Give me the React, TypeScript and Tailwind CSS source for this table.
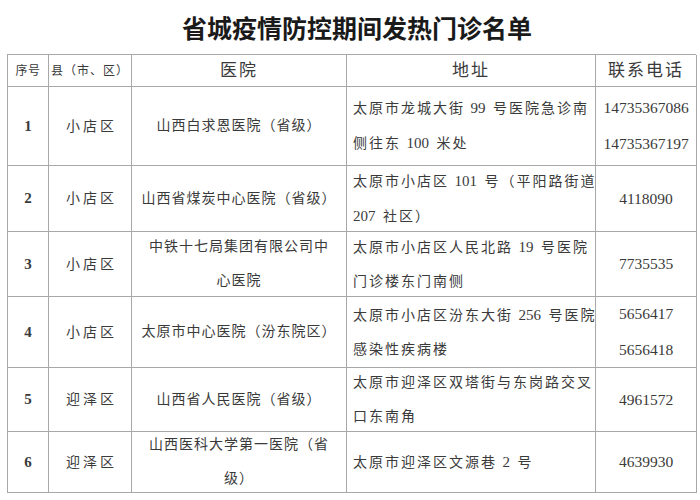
const rows = [
  {
    no: '1',
    area: '小店区',
    hospital: ['山西白求恩医院（省级）'],
    address: ['太原市龙城大街 99 号医院急诊南', '侧往东 100 米处'],
    phone: ['14735367086', '14735367197'],
  },
  {
    no: '2',
    area: '小店区',
    hospital: ['山西省煤炭中心医院（省级）'],
    address: ['太原市小店区 101 号（平阳路街道', '207 社区）'],
    phone: ['4118090'],
  },
  {
    no: '3',
    area: '小店区',
    hospital: ['中铁十七局集团有限公司中', '心医院'],
    address: ['太原市小店区人民北路 19 号医院', '门诊楼东门南侧'],
    phone: ['7735535'],
  },
  {
    no: '4',
    area: '小店区',
    hospital: ['太原市中心医院（汾东院区）'],
    address: ['太原市小店区汾东大街 256 号医院', '感染性疾病楼'],
    phone: ['5656417', '5656418'],
  },
  {
    no: '5',
    area: '迎泽区',
    hospital: ['山西省人民医院（省级）'],
    address: ['太原市迎泽区双塔街与东岗路交叉', '口东南角'],
    phone: ['4961572'],
  },
  {
    no: '6',
    area: '迎泽区',
    hospital: ['山西医科大学第一医院（省', '级）'],
    address: ['太原市迎泽区文源巷 2 号'],
    phone: ['4639930'],
  },
]

const cell = 'flex flex-col justify-center border-r border-b border-[#a8a8a8]'

// digits inside the address keep normal spacing, only the hanzi are spread
function Addr({ text }: { text: string }) {
  return (
    <span>
      {text.split(/(\d+)/).map((part, i) =>
        /^\d+$/.test(part) ? (
          <span key={i} className="tracking-normal text-[15px] mr-[2px]">
            {part}
          </span>
        ) : (
          <span key={i}>{part}</span>
        ),
      )}
    </span>
  )
}

export default function App() {
  return (
    <div className="w-[700px] h-[500px] bg-white text-[#3a3a3a] font-['Liberation_Serif','Noto_Sans_CJK_SC',serif]">
      <div className="h-[54px] flex items-center justify-center pl-[14px]">
        <h1 className="text-[25px] leading-none font-bold text-[#1a1a1a] font-['Noto_Sans_CJK_SC',sans-serif]">
          省城疫情防控期间发热门诊名单
        </h1>
      </div>

      <div className="ml-[7px] w-[689px] grid grid-cols-[41px_83px_215px_249px_101px] grid-rows-[32px_79px_66px_65px_71px_64px_61px] border-l border-t border-[#a8a8a8]">
        <div className={`${cell} items-center text-[12px] tracking-[0.5px]`}>序号</div>
        <div className={`${cell} items-center text-[12px] tracking-[1px]`}>县（市、区）</div>
        <div className={`${cell} items-center text-[17px] tracking-[2px]`}>医院</div>
        <div className={`${cell} items-center text-[17px] tracking-[2px]`}>地址</div>
        <div className={`${cell} items-center text-[17px] tracking-[2px]`}>联系电话</div>

        {rows.map((r) => (
          <div key={r.no} className="contents">
            <div className={`${cell} items-center text-[15px] font-bold`}>{r.no}</div>
            <div className={`${cell} items-center text-[14px] tracking-[3px] pl-[3px]`}>
              {r.area}
            </div>
            <div className={`${cell} items-center text-[14px] tracking-[1px] leading-[34px]`}>
              {r.hospital.map((l) => (
                <span key={l}>{l}</span>
              ))}
            </div>
            <div className={`${cell} items-start pl-[6px] text-[14px] tracking-[2px] leading-[34px] whitespace-nowrap`}>
              {r.address.map((l) => (
                <Addr key={l} text={l} />
              ))}
            </div>
            <div className={`${cell} items-center text-[15.5px] leading-[36px]`}>
              {r.phone.map((l) => (
                <span key={l}>{l}</span>
              ))}
            </div>
          </div>
        ))}
      </div>
    </div>
  )
}
